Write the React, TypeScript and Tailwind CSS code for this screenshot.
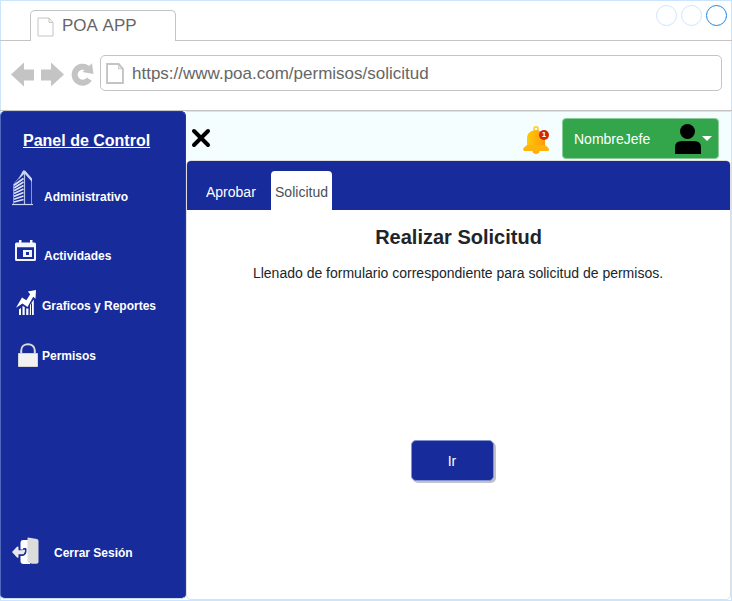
import type { ReactNode } from 'react';

function PageIcon({ className, stroke }: { className: string; stroke: number }) {
  return (
    <svg className={className} viewBox="0 0 17 20" fill="none" stroke="#c4c4c4" strokeWidth={stroke} preserveAspectRatio="none">
      <path d="M1 1H12L16 5.5V19H1Z" />
      <path d="M12 1V5.5H16" strokeWidth="1" />
    </svg>
  );
}

function BuildingIcon() {
  return (
    <svg width="22" height="36" viewBox="0 0 22 36" fill="none">
      <path d="M0 34.5H21" stroke="#ced6f5" strokeWidth="1.2" />
      <path d="M1.5 34V14.5L12.5 1L19.5 9.5V34" stroke="#8896d4" strokeWidth="1" />
      <path d="M12.5 1V34" stroke="#b5bfe8" strokeWidth="1.2" />
      <path d="M11 .5H13L20 8.5V12L12.5 3.5L6 10Z" fill="#ced6f5" />
      <path
        d="M2 15.2L11.5 8.5M2 18L11.5 12M2 20.8L11.5 15.5M2 23.6L11.5 19M2 26.4L11.5 22.5M2 29.2L11.5 26M2 32L11.5 29.5"
        stroke="#dce2fa"
        strokeWidth="1.7"
      />
    </svg>
  );
}

function CalendarIcon() {
  return (
    <svg width="21" height="21" viewBox="0 0 21 21" fill="#f2f4ff">
      <path d="M4 0H6.5V2.5H15V0H17.5V2.5H19.5Q21 2.5 21 4V19.5Q21 21 19.5 21H1.5Q0 21 0 19.5V4Q0 2.5 1.5 2.5H4ZM2 7.2V19H19V7.2Z" fillRule="evenodd" />
      <path d="M8 10H17V17H8ZM11 12V15H14V12Z" fillRule="evenodd" />
    </svg>
  );
}

function ChartIcon() {
  return (
    <svg width="20" height="25" viewBox="0 0 20 25" fill="#fff">
      <path d="M0 17.8L6 7.5L10.3 10.2L14.2 4.2L11.8 1.5L20 0L19.5 8.8L17.2 6.7L11.5 17L6.5 13.5Z" />
      <path d="M3 19.5L5 18V25H3ZM6.5 16L8.7 17V25H6.5ZM10.2 18.5L12.4 18.5V25H10.2ZM14 15L17.8 9.5V25H16V13L15 14V25H13.8Z" />
    </svg>
  );
}

function LockIcon() {
  return (
    <svg width="20" height="24" viewBox="0 0 20 24">
      <path d="M3.2 11V7.5C3.2 -1 16.8 -1 16.8 7.5V11" fill="none" stroke="#dadada" strokeWidth="2" />
      <path d="M.5 10.5H19.5V23.5H.5Z" fill="#f2f2f2" stroke="#d5d5d5" />
    </svg>
  );
}

function LogoutIcon() {
  return (
    <svg width="27" height="28" viewBox="0 0 27 28">
      <path d="M11 3H18V27H11.5Q8.5 27 8.5 24V6Q8.5 3 11 3Z" fill="#fff" />
      <path d="M6 13H11.5V11.5H14V14Q14 18.5 10 18.5H6Z" fill="#182b9b" stroke="#182b9b" strokeWidth="1" />
      <path d="M0 15L5 9.8Q6.5 8.8 6.5 10.5V13.2H10Q11.3 13.2 11.3 12.8H13V14.5Q12.5 17.2 10 17.2H6.5V20Q6.3 21.5 5 20.4Z" fill="#e8e8e8" />
      <path d="M16 .5L25 2Q26.5 2.3 26.5 4V25Q26.5 26.8 24.5 26.8H20L16 25.5Q15.5 25.3 15.5 24V2Q15.3 .5 16 .5Z" fill="#dcdcdc" />
    </svg>
  );
}

function BellIcon() {
  return (
    <svg width="27" height="28" viewBox="0 0 27 28">
      <defs>
        <linearGradient id="bell" x1="0" x2="1">
          <stop offset="0" stopColor="#ffca08" />
          <stop offset="1" stopColor="#ff9a08" />
        </linearGradient>
      </defs>
      <circle cx="13" cy="2.8" r="2.1" fill="none" stroke="#ffc61a" strokeWidth="1.4" />
      <circle cx="13" cy="24.3" r="3.6" fill="#ffad08" />
      <path d="M4 20V12C4 1.5 22 1.5 22 12V20Z" fill="url(#bell)" />
      <path d="M4 19H22L25.5 22Q27 25 24.5 25H1.5Q-.5 24.5 .5 22Z" fill="#ffb30c" />
    </svg>
  );
}

function MenuItem({ icon, label, className }: { icon: ReactNode; label: string; className: string }) {
  return (
    <a className={`flex text-[12px] font-bold leading-[14px] ${className}`}>
      {icon}
      <span className="whitespace-nowrap">{label}</span>
    </a>
  );
}

function Sidebar() {
  return (
    <nav className="flex h-[488px] w-[186px] shrink-0 flex-col rounded-[5px] border border-[#5268bc] border-b-[#cfdcf5] border-r-[#24389f] border-t-[#24389f] bg-[#182b9b] text-white">
      <h2 className="mt-[19px] h-[20px] pl-[22px] text-[16px] font-bold leading-[20px] underline">Panel de Control</h2>
      <MenuItem icon={<BuildingIcon />} label="Administrativo" className="mt-[19px] h-[36px] items-end gap-[10px] pl-[11px] [&>span]:mb-[2px]" />
      <MenuItem icon={<CalendarIcon />} label="Actividades" className="mt-[34px] h-[22px] items-start gap-[8px] pl-[14px] [&>span]:mt-[9px]" />
      <MenuItem icon={<ChartIcon />} label="Graficos y Reportes" className="mt-[28px] h-[25px] items-start gap-[6px] pl-[15px] [&>span]:mt-[9px]" />
      <MenuItem icon={<LockIcon />} label="Permisos" className="mt-[28px] h-[24px] items-start gap-[4px] pl-[17px] [&>span]:mt-[6px]" />
      <MenuItem icon={<LogoutIcon />} label="Cerrar Sesión" className="mb-[33px] mt-auto h-[28px] items-start gap-[15px] pl-[11px] [&>span]:mt-[9px]" />
    </nav>
  );
}

function BrowserChrome() {
  return (
    <header className="-mx-px -mt-px h-[111px] shrink-0 border-b border-[#c4c4c4] text-[17px] text-[#666]">
      <div className="flex h-[41px] items-end">
        <div className="h-full w-[30px] border-b border-[#c4c4c4]" />
        <div className="flex h-[31px] w-[146px] items-center rounded-t-[5px] border border-b-0 border-[#c4c4c4] pl-[6px]">
          <PageIcon className="mt-[2px] h-[20px] w-[17px]" stroke={1} />
          <span className="ml-[8px] [font-kerning:none]">POA APP</span>
        </div>
        <div className="flex h-full flex-1 justify-end gap-[4px] border-b border-[#c4c4c4] pr-[5px] pt-[5px]">
          <i className="size-[21px] rounded-full border border-[#cce5ff]" />
          <i className="size-[21px] rounded-full border border-[#cce5ff]" />
          <i className="size-[21px] rounded-full border border-[#1489ee]" />
        </div>
      </div>
      <div className="flex h-[50px] items-end pl-[11px]">
        <svg className="mb-[3px] shrink-0" width="84" height="26" viewBox="0 0 84 26" fill="#c4c4c4">
          <path d="M0 12.5L13 .5V7.5H23V18.5H13V24.5ZM53 12.5L40 .5V7.5H30V18.5H40V24.5Z" />
          <path d="M78.3 17.1A8 8 0 1 1 76.5 6.3" fill="none" stroke="#c4c4c4" strokeWidth="6" />
          <path d="M81 1.3L82.5 12L71.5 10Z" />
        </svg>
        <div className="ml-[5px] flex h-[36px] w-[622px] items-center rounded-[5px] border border-[#c4c4c4] pl-[5px]">
          <PageIcon className="h-[21px] w-[18px]" stroke={1.8} />
          <span className="ml-[8px] mt-[2px]">https://www.poa.com/permisos/solicitud</span>
        </div>
      </div>
    </header>
  );
}

function TopBar() {
  return (
    <div className="flex h-[49px] border-t border-[#cce5ff] bg-[#f5feff]">
      <svg className="ml-[5px] mt-[16px]" width="20" height="20" viewBox="0 0 20 20">
        <path d="M3 3L17 17M17 3L3 17" stroke="#000" strokeWidth="4" strokeLinecap="round" />
      </svg>
      <div className="relative ml-auto mt-[14px] h-[28px] w-[27px]">
        <BellIcon />
        <span className="absolute left-[16px] top-[4px] flex size-[10px] items-center justify-center rounded-full bg-[#cd2908] text-[8px] font-bold leading-none text-white">1</span>
      </div>
      <button className="ml-[12px] mr-[12px] mt-[6px] flex h-[41px] w-[157px] items-center rounded-[4px] border border-[#8acb99] bg-[#33a64c] pl-[11px] text-[14px] text-white">
        <span className="mt-[2px]">NombreJefe</span>
        <svg className="ml-auto mr-[6px] mt-px" width="38" height="30" viewBox="0 0 38 30">
          <circle cx="13.5" cy="7.5" r="7.5" fill="#000" />
          <path d="M1 30V23Q1 17 8 17H20Q27 17 27 23V30Z" fill="#000" />
          <path d="M28 12H38L33 17Z" fill="#fff" />
        </svg>
      </button>
    </div>
  );
}

export default function App() {
  return (
    <div className="flex h-[601px] w-[732px] flex-col border-b border-t border-[#cce5ff] bg-white font-['Liberation_Sans',Arial,sans-serif]">
      <div className="flex min-h-0 flex-1 flex-col border-l border-r border-[#cce5ff]">
        <BrowserChrome />
        <div className="-ml-px flex h-[489px]">
          <Sidebar />
          <main className="flex min-w-0 flex-1 flex-col">
            <TopBar />
            <section className="flex flex-1 flex-col items-center rounded-[5px] border border-[#dfdfdf] text-[#212529]">
              <div className="flex h-[49px] w-full items-end rounded-t-[4px] bg-[#182b9b] text-[14px] text-white">
                <a className="flex h-[39px] w-[84px] items-center pl-[19px] pt-[3px]">Aprobar</a>
                <a className="flex h-[39px] w-[61px] items-center justify-center rounded-t-[4px] bg-white pt-[3px] text-[#495057]">Solicitud</a>
              </div>
              <h1 className="mt-[15px] text-[20px] font-bold leading-[24px]">Realizar Solicitud</h1>
              <p className="mr-px mt-[14px] text-[14px] leading-[20px]">Llenado de formulario correspondiente para solicitud de permisos.</p>
              <button className="mr-[13px] mt-[157px] h-[41px] w-[83px] rounded-[5px] border border-[#8291cf] bg-[#182b9b] pt-px text-[14px] text-white shadow-[2px_2px_0_#c2c2ca]">Ir</button>
            </section>
          </main>
        </div>
      </div>
    </div>
  );
}
